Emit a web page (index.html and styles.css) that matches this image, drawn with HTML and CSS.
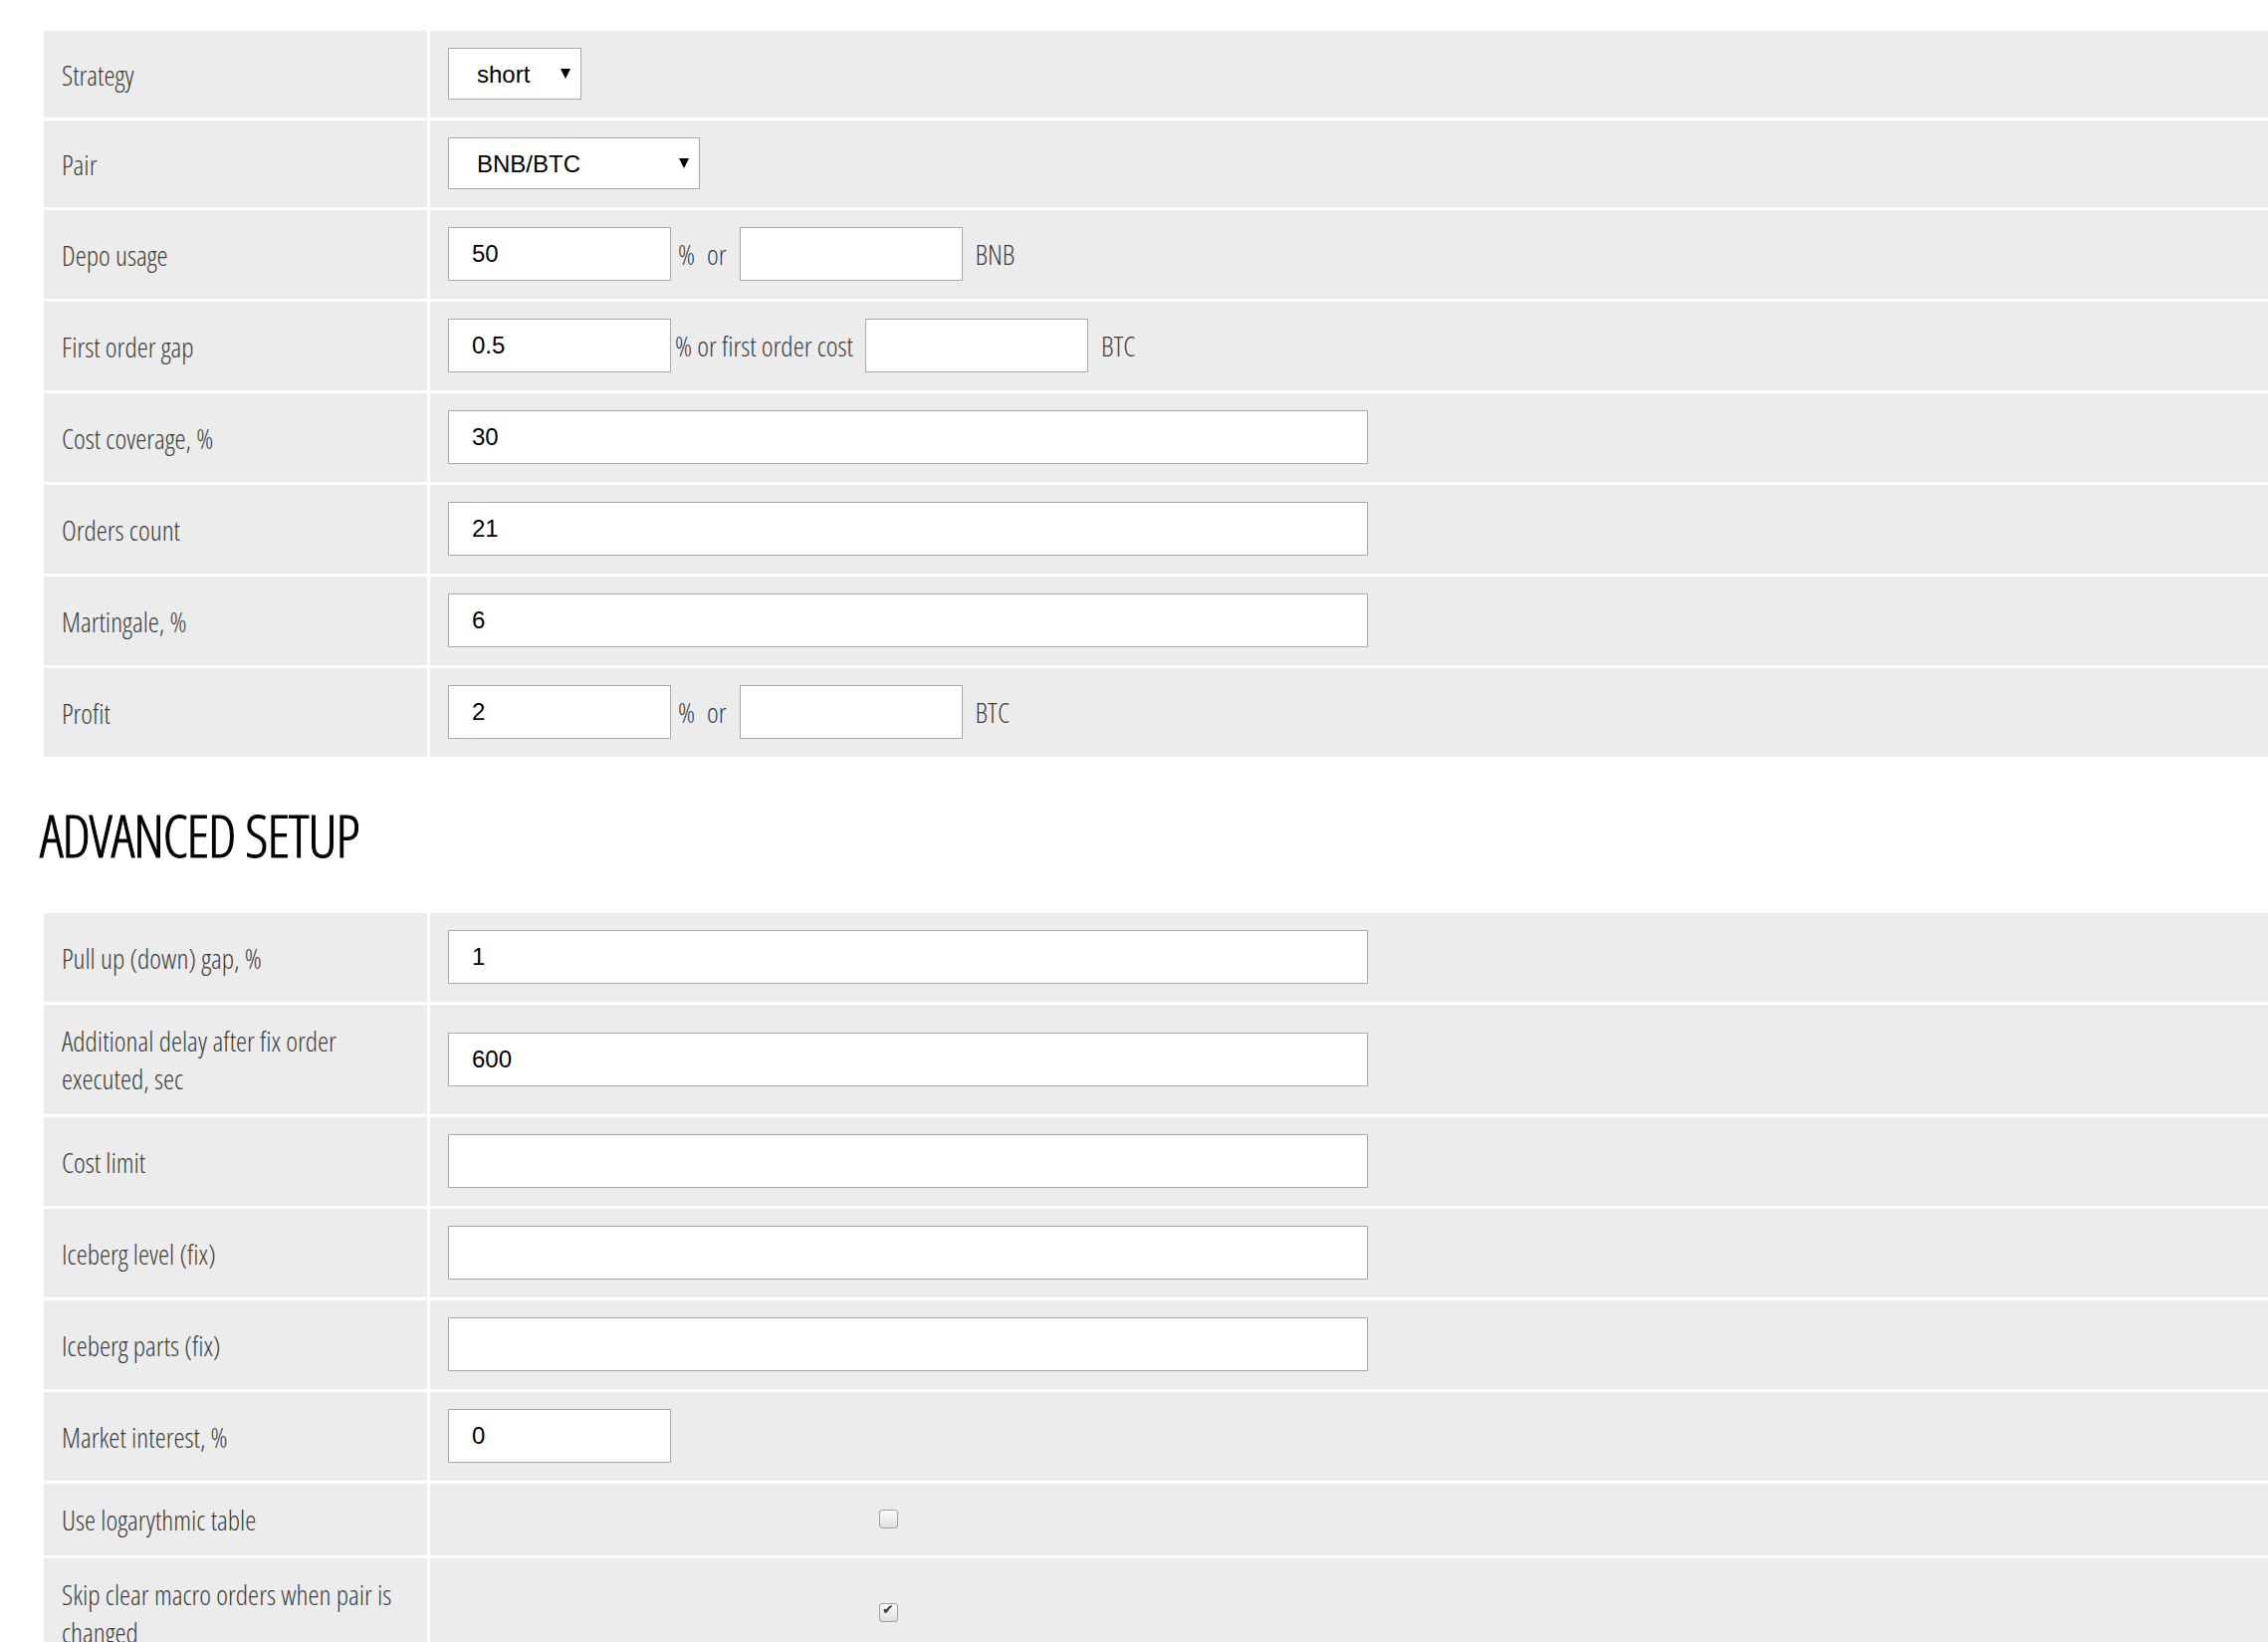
FILE: index.html
```html
<!DOCTYPE html>
<html lang="en">
<head>
    <meta charset="UTF-8">
    <meta name="viewport" content="width=device-width, initial-scale=1.0">
    <title>Bot setup</title>
    <link rel="stylesheet" href="styles.css">
</head>
<body>
<div class="page">
    <table class="setup">
        <tr>
            <td class="name">Strategy</td>
            <td class="value">
                <div class="field">
                    <span class="select-box"><select class="select select-strategy"><option>short</option><option>long</option></select></span>
                </div>
            </td>
        </tr>
        <tr>
            <td class="name">Pair</td>
            <td class="value">
                <div class="field">
                    <span class="select-box"><select class="select select-pair"><option>BNB/BTC</option><option>ETH/BTC</option></select></span>
                </div>
            </td>
        </tr>
        <tr>
            <td class="name">Depo usage</td>
            <td class="value">
                <div class="field">
                    <input class="input input-short" type="text" value="50">
                    <span class="unit unit-pct">%</span><span class="unit unit-or">or</span>
                    <input class="input input-short" type="text" value="">
                    <span class="unit unit-cur">BNB</span>
                </div>
            </td>
        </tr>
        <tr>
            <td class="name">First order gap</td>
            <td class="value">
                <div class="field">
                    <input class="input input-short" type="text" value="0.5">
                    <span class="unit unit-long">% or first order cost</span>
                    <input class="input input-short" type="text" value="">
                    <span class="unit unit-cur">BTC</span>
                </div>
            </td>
        </tr>
        <tr>
            <td class="name">Cost coverage, %</td>
            <td class="value"><div class="field"><input class="input input-wide" type="text" value="30"></div></td>
        </tr>
        <tr>
            <td class="name">Orders count</td>
            <td class="value"><div class="field"><input class="input input-wide" type="text" value="21"></div></td>
        </tr>
        <tr>
            <td class="name">Martingale, %</td>
            <td class="value"><div class="field"><input class="input input-wide" type="text" value="6"></div></td>
        </tr>
        <tr>
            <td class="name">Profit</td>
            <td class="value">
                <div class="field">
                    <input class="input input-short" type="text" value="2">
                    <span class="unit unit-pct">%</span><span class="unit unit-or">or</span>
                    <input class="input input-short" type="text" value="">
                    <span class="unit unit-cur">BTC</span>
                </div>
            </td>
        </tr>
    </table>

    <h2 class="section-title">ADVANCED SETUP</h2>

    <table class="setup">
        <tr>
            <td class="name">Pull up (down) gap, %</td>
            <td class="value"><div class="field"><input class="input input-wide" type="text" value="1"></div></td>
        </tr>
        <tr>
            <td class="name">Additional delay after fix order executed, sec</td>
            <td class="value"><div class="field"><input class="input input-wide" type="text" value="600"></div></td>
        </tr>
        <tr>
            <td class="name">Cost limit</td>
            <td class="value"><div class="field"><input class="input input-wide" type="text" value=""></div></td>
        </tr>
        <tr>
            <td class="name">Iceberg level (fix)</td>
            <td class="value"><div class="field"><input class="input input-wide" type="text" value=""></div></td>
        </tr>
        <tr>
            <td class="name">Iceberg parts (fix)</td>
            <td class="value"><div class="field"><input class="input input-wide" type="text" value=""></div></td>
        </tr>
        <tr>
            <td class="name">Market interest, %</td>
            <td class="value"><div class="field"><input class="input input-short" type="text" value="0"></div></td>
        </tr>
        <tr>
            <td class="name">Use logarythmic table</td>
            <td class="value"><div class="field"><input class="check" type="checkbox"></div></td>
        </tr>
        <tr>
            <td class="name">Skip clear macro orders when pair is changed</td>
            <td class="value"><div class="field"><input class="check" type="checkbox" checked></div></td>
        </tr>
    </table>
</div>
</body>
</html>
```

FILE: styles.css
```css
body{
    margin: 0;
    background: #fff;
    overflow: hidden;
}
.page{
    padding: 28px 0 0 41px;
    overflow: hidden;
}
.setup{
    border-spacing: 3px;
    width: 2400px;
    table-layout: fixed;
}
.setup td{
    background-color: #ececec;
    padding: 17px 18px 18px;
    vertical-align: middle;
}
.setup td.name{
    padding-bottom: 17px;
}
.name{
    width: 349px;
    font-family: "Open Sans", "Liberation Sans", sans-serif;
    font-weight: 300;
    font-stretch: 75%;
    font-size: 28px;
    line-height: 38px;
    color: #3d3d3d;
}
.field{
    display: flex;
    align-items: center;
}
.input{
    box-sizing: border-box;
    height: 54px;
    border: 1px solid #a9a9a9;
    border-radius: 0;
    background: #fff;
    padding: 0 0 0 23px;
    font-family: "Liberation Sans", Arial, sans-serif;
    font-size: 24px;
    color: #000;
    outline: none;
    margin: 0;
}
.input-short{
    width: 224px;
}
.input-wide{
    width: 924px;
}
.select-box{
    position: relative;
    display: inline-block;
}
.select-box::after{
    content: "";
    position: absolute;
    right: 11px;
    top: 21px;
    border-left: 5px solid transparent;
    border-right: 5px solid transparent;
    border-top: 10px solid #000;
    pointer-events: none;
}
.select{
    -webkit-appearance: none;
    appearance: none;
    box-sizing: border-box;
    height: 52px;
    border: 1px solid #a9a9a9;
    border-radius: 0;
    background: #fff;
    padding: 0 0 0 28px;
    font-family: "Liberation Sans", Arial, sans-serif;
    font-size: 24px;
    color: #000;
    margin: 0;
    display: block;
}
.select-strategy{
    width: 134px;
}
.select-pair{
    width: 253px;
}
.unit{
    font-family: "Open Sans", "Liberation Sans", sans-serif;
    font-weight: 300;
    font-stretch: 75%;
    font-size: 28px;
    line-height: 38px;
    color: #3d3d3d;
}
.unit-pct{
    margin-left: 7px;
}
.unit-or{
    margin-left: 12px;
    margin-right: 13px;
}
.unit-long{
    margin-left: 4px;
    margin-right: 12px;
}
.unit-cur{
    margin-left: 13px;
}
.section-title{
    font-family: "Open Sans", "Liberation Sans", sans-serif;
    font-weight: 300;
    font-stretch: 75%;
    font-size: 58px;
    line-height: 70px;
    letter-spacing: -1px;
    -webkit-text-stroke: 1px #000;
    color: #000;
    margin: 41px 0 40px -1px;
}
.check{
    -webkit-appearance: none;
    appearance: none;
    box-sizing: border-box;
    width: 19px;
    height: 19px;
    margin: 0 0 0 433px;
    border: 1px solid #a0a0a0;
    border-radius: 3px;
    background: linear-gradient(#fdfdfd, #dedede);
    position: relative;
}
.check:checked::after{
    content: "\2714";
    position: absolute;
    left: 2px;
    top: -3px;
    font-family: "DejaVu Sans", sans-serif;
    font-size: 14px;
    color: #333;
}
```
